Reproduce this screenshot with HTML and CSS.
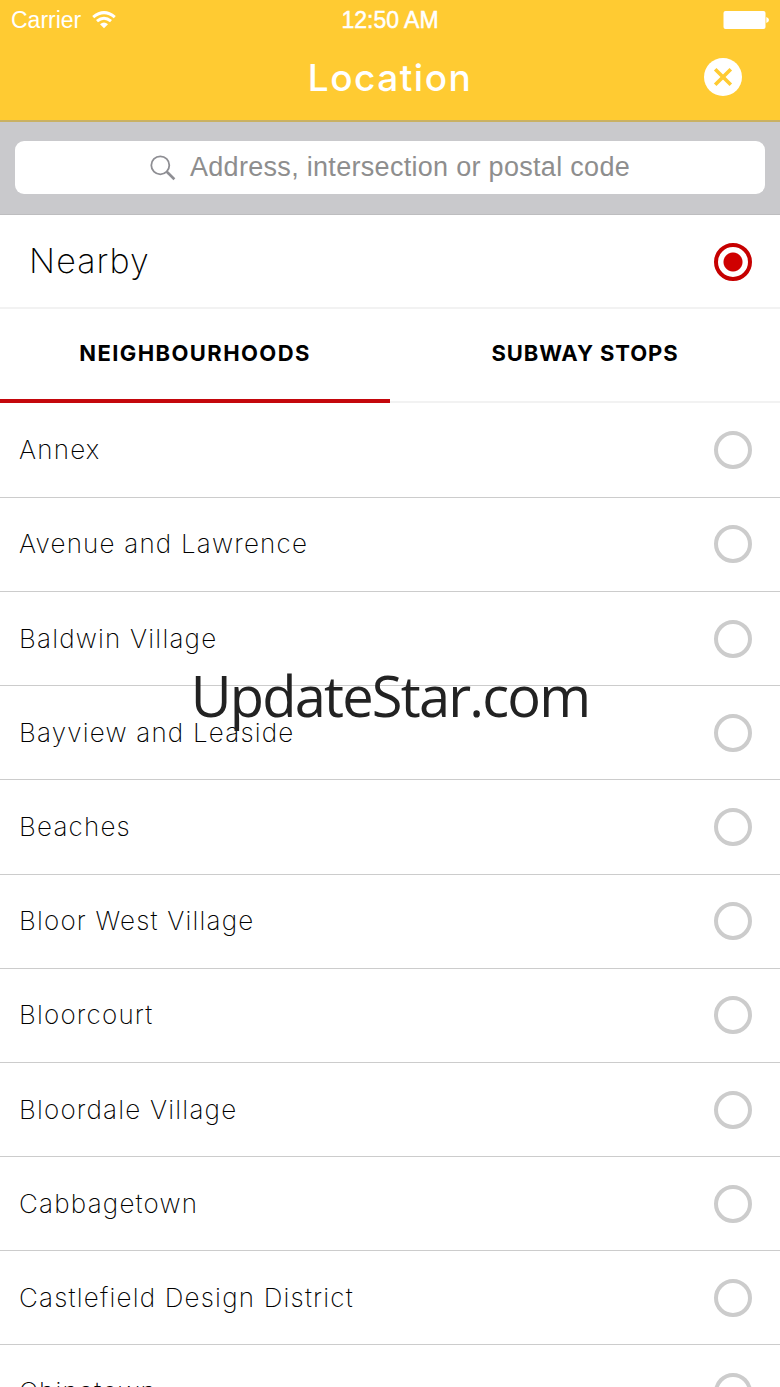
FILE: index.html
```html
<!DOCTYPE html>
<html lang="en">
<head>
    <meta charset="UTF-8">
    <meta name="viewport" content="width=device-width, initial-scale=1.0">
    <title>Location</title>
    <link rel="stylesheet" href="styles.css">
</head>
<body>
    <div class="screen">
        <header class="header">
            <div class="status-bar">
                <div class="carrier">
                    <span>Carrier</span>
                    <svg width="24" height="18" viewBox="0 0 24 18" fill="none" stroke="#fff" stroke-width="3">
                        <path d="M1.2 6.2Q12-3 22.8 6.2"/>
                        <path d="M5 10.2Q12 4.2 19 10.2"/>
                        <path d="M8 13.2Q12 9.8 16 13.2L12 17.2Z" fill="#fff" stroke="none"/>
                    </svg>
                </div>
                <div class="time">12:50 AM</div>
                <div class="battery">
                    <svg width="46" height="20" viewBox="0 0 46 20" fill="#fff">
                        <rect x="0.5" y="1" width="42" height="18" rx="2"/>
                        <path d="M43.3 7Q46 8 46 10T43.3 13Z"/>
                    </svg>
                </div>
            </div>
            <div class="title-bar">
                <h1>Location</h1>
                <button class="close" aria-label="Close">
                    <svg width="38" height="38" viewBox="0 0 38 38">
                        <circle cx="19" cy="19" r="19" fill="#fff"/>
                        <path d="M11.2 11.2L26.8 26.8M26.8 11.2L11.2 26.8" stroke="#ffcb32" stroke-width="3.6"/>
                    </svg>
                </button>
            </div>
        </header>

        <div class="search-bar">
            <div class="search-field">
                <svg width="26" height="26" viewBox="0 0 26 26" fill="none" stroke="#8e8e93">
                    <circle cx="10.3" cy="10.3" r="9" stroke-width="1.8"/>
                    <path d="M16.8 16.8L24.4 24.2" stroke-width="2.6"/>
                </svg>
                <span>Address, intersection or postal code</span>
            </div>
        </div>

        <div class="nearby">
            <span class="label">Nearby</span>
            <span class="radio selected"></span>
        </div>

        <div class="tabs">
            <div class="tab active"><span>NEIGHBOURHOODS</span></div>
            <div class="tab"><span>SUBWAY STOPS</span></div>
        </div>

        <ul class="list">
            <li><span class="label">Annex</span><span class="radio"></span></li>
            <li><span class="label">Avenue and Lawrence</span><span class="radio"></span></li>
            <li><span class="label">Baldwin Village</span><span class="radio"></span></li>
            <li><span class="label">Bayview and Leaside</span><span class="radio"></span></li>
            <li><span class="label">Beaches</span><span class="radio"></span></li>
            <li><span class="label">Bloor West Village</span><span class="radio"></span></li>
            <li><span class="label">Bloorcourt</span><span class="radio"></span></li>
            <li><span class="label">Bloordale Village</span><span class="radio"></span></li>
            <li><span class="label">Cabbagetown</span><span class="radio"></span></li>
            <li><span class="label">Castlefield Design District</span><span class="radio"></span></li>
            <li><span class="label">Chinatown</span><span class="radio"></span></li>
        </ul>

        <div class="watermark">UpdateStar.com</div>
    </div>
</body>
</html>
```

FILE: styles.css
```css
* {
    box-sizing: border-box;
}
body {
    margin: 0;
    background-color: #fff;
    font-family: Inter, "Liberation Sans", sans-serif;
    color: #000;
}
.screen {
    position: relative;
    width: 780px;
    height: 1387px;
    overflow: hidden;
}
.header {
    height: 122px;
    background-color: #ffcb32;
    border-bottom: 2px solid #c9b163;
    color: #fff;
}
.status-bar {
    display: grid;
    grid-template-columns: 1fr auto 1fr;
    align-items: center;
    height: 40px;
    padding: 0 11px;
    font-family: "Liberation Sans", sans-serif;
    font-size: 23px;
}
.carrier {
    display: flex;
    align-items: center;
    gap: 11px;
}
.time {
    font-weight: 500;
    -webkit-text-stroke: 0.5px #fff;
}
.battery {
    display: flex;
    justify-content: flex-end;
}
.title-bar {
    display: grid;
    grid-template-columns: 1fr auto 1fr;
    align-items: center;
    height: 74px;
    padding: 0 38px;
}
.title-bar h1 {
    grid-column: 2;
    margin: 0;
    font-size: 37px;
    font-weight: 500;
    letter-spacing: 1.5px;
}
.close {
    display: flex;
    justify-self: end;
    padding: 0;
    border: none;
    background: none;
}
.search-bar {
    height: 93px;
    padding: 19px 15px;
    background-color: #c9c9cc;
    border-bottom: 1px solid #bdbdbf;
}
.search-field {
    display: flex;
    align-items: center;
    justify-content: center;
    gap: 14px;
    height: 53px;
    border-radius: 9px;
    background-color: #fff;
    color: #8e8e8e;
    font-family: "Liberation Sans", sans-serif;
    font-size: 27px;
    letter-spacing: 0.3px;
}
.nearby {
    display: flex;
    align-items: center;
    justify-content: space-between;
    height: 94px;
    padding: 2px 28px 0 29px;
    border-bottom: 2px solid #f2f2f2;
    font-size: 34px;
    font-weight: 200;
    letter-spacing: 1.1px;
}
.nearby .label {
    padding-bottom: 4px;
}
.radio {
    flex: none;
    width: 38px;
    height: 38px;
    border: 4px solid #ccc;
    border-radius: 50%;
}
.radio.selected {
    border-color: #c60000;
    background: radial-gradient(circle, #cf0000 9px, #fff 10px);
}
.tabs {
    display: flex;
    height: 94px;
}
.tab {
    flex: 1;
    display: flex;
    align-items: center;
    justify-content: center;
    padding-bottom: 4px;
    border-bottom: 2px solid #f2f2f2;
    font-size: 22px;
    font-weight: 700;
    letter-spacing: 0.9px;
}
.tab.active {
    padding-bottom: 2px;
    border-bottom: 4px solid #c4070c;
    letter-spacing: 1.4px;
}
.list {
    margin: 0;
    padding: 0.6px 0 0;
    list-style: none;
}
.list li {
    display: flex;
    align-items: center;
    justify-content: space-between;
    height: 94.2px;
    padding: 0 28px 0 19px;
    border-bottom: 1px solid #ccc;
    font-size: 26px;
    font-weight: 200;
    letter-spacing: 1.2px;
}
.list .label {
    padding-bottom: 1px;
}
.watermark {
    position: absolute;
    top: 657px;
    left: 0;
    width: 780px;
    text-align: center;
    font-family: "Open Sans", "Noto Sans", sans-serif;
    font-size: 56px;
    line-height: 76px;
    letter-spacing: -1.8px;
    color: #222;
}
```
